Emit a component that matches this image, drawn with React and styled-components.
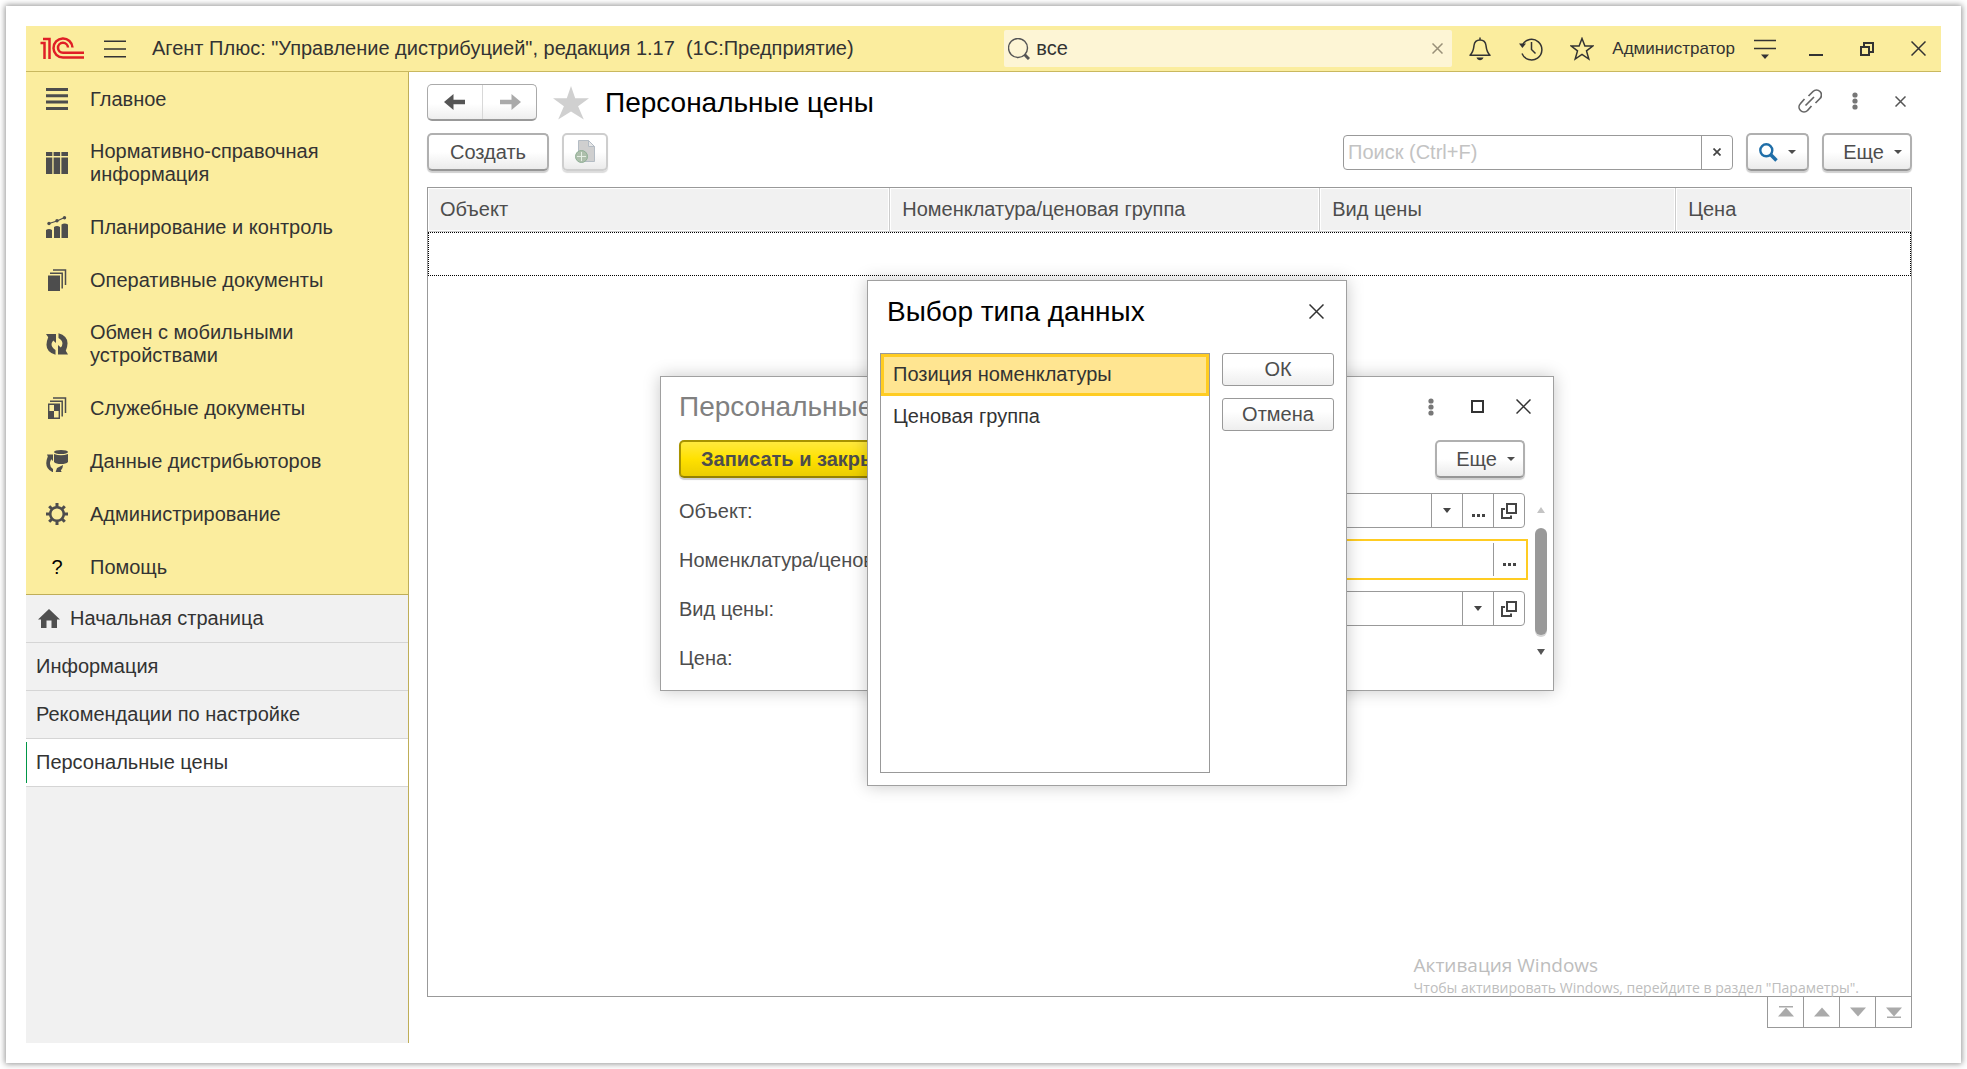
import React from "react";
import styled, { createGlobalStyle, css } from "styled-components";

const GlobalStyle = createGlobalStyle`
  *, *::before, *::after { box-sizing: border-box; }
  body { margin: 0; background: #fff; }
  body, button, input { font-family: "Liberation Sans", Arial, sans-serif; font-size: 20px; line-height: 23px; color: #333; }
  button { padding: 0; border: 0; background: none; cursor: pointer; }
  svg { display: block; flex: none; }
  h1, h2, ul, p { margin: 0; padding: 0; font-weight: 400; list-style: none; }
`;

const Page = styled.div`
  display: flex;
  min-height: 100vh;
  padding: 6px;
`;

const Card = styled.div`
  flex: 1;
  min-width: 0;
  display: flex;
  flex-direction: column;
  padding: 20px;
  background: #fff;
  box-shadow: 0 0 6px 1px rgba(0, 0, 0, 0.42);
`;

/* ---------- top bar ---------- */

const TopBar = styled.header`
  display: flex;
  align-items: center;
  gap: 5px;
  height: 46px;
  padding-left: 14px;
  background: #fbed9e;
  border-bottom: 1px solid #c9b85f;
`;

const Brand = styled.div`
  flex: 1;
  min-width: 0;
  display: flex;
  align-items: center;
  gap: 20px;
  white-space: nowrap;
`;

const BrandTitle = styled.span`
  padding-left: 6px;
  white-space: pre;
`;

const GlobalSearch = styled.label`
  flex: 0 1 448px;
  display: flex;
  align-items: center;
  gap: 6px;
  height: 37px;
  padding: 0 4px;
  border-radius: 2px;
  background: #fdf5d5;
`;

const PlainInput = styled.input`
  flex: 1;
  min-width: 0;
  width: 100%;
  padding: 0;
  border: 0;
  outline: 0;
  background: transparent;
  &::placeholder { color: #c3c3c3; opacity: 1; }
`;

const IconButton = styled.button`
  display: flex;
  align-items: center;
  justify-content: center;
  width: ${(p) => p.$w || 46}px;
  height: ${(p) => p.$h || 36}px;
  color: ${(p) => p.$color || "#333"};
`;

const UserName = styled.button`
  padding: 0 2px;
  font-size: 17px;
`;

/* ---------- sidebar ---------- */

const Body = styled.div`
  flex: 1;
  display: flex;
  min-height: 0;
`;

const Sidebar = styled.aside`
  flex: 0 0 383px;
  background: #f1f1f1;
  border-right: 1px solid #bfae58;
`;

const Sections = styled.nav`
  padding: 1px 0;
  background: #fbed9e;
  box-shadow: inset 0 -1px #bfae58;
`;

const SectionLink = styled.a`
  display: flex;
  align-items: center;
  gap: 22px;
  min-height: 53px;
  padding: 14px 60px 15px 20px;
  color: #333;
  text-decoration: none;
`;

const OpenTab = styled.a`
  display: flex;
  align-items: center;
  gap: 10px;
  height: 48px;
  padding-left: ${(p) => (p.$home ? 12 : 10)}px;
  border-bottom: 1px solid #d5d5d5;
  color: #333;
  text-decoration: none;
  ${(p) => p.$active && css`
    background: linear-gradient(#009646, #009646) 0 3px / 1px 41px no-repeat #fff;
  `}
`;

/* ---------- work area ---------- */

const Workspace = styled.main`
  position: relative;
  flex: 1;
  min-width: 0;
  display: flex;
  flex-direction: column;
  padding: 12px 29px 15px 18px;
`;

const Row = styled.div`
  display: flex;
  align-items: center;
  gap: ${(p) => p.$gap || 0}px;
`;

const Spacer = styled.div`flex: 1;`;

const Title = styled.h1`
  font-size: 28px;
  line-height: 36px;
  color: #000;
`;

const HeadActions = styled.div`
  display: flex;
  align-self: flex-start;
  gap: 21px;
`;

const NavButtons = styled.div`
  display: flex;
  height: 37px;
  border: 1px solid #aaa;
  border-bottom: 2px solid #999;
  border-radius: 5px;
  background: linear-gradient(#fff 55%, #eee);
`;

const NavButton = styled.button`
  display: flex;
  align-items: center;
  justify-content: center;
  width: 54px;
  color: ${(p) => (p.$muted ? "#aaa" : "#555")};
  & + & { border-left: 1px solid #d8d8d8; }
`;

const raised = css`
  border: 2px solid #b0b0b0;
  border-bottom-color: #969696;
  border-radius: 5px;
  box-shadow: 0 2px 1px #cfcfcf;
  background: linear-gradient(#fff 50%, #ebebeb);
  color: #4d4d4d;
`;

const Button = styled.button`
  ${raised}
  display: flex;
  align-items: center;
  justify-content: center;
  gap: 10px;
  height: 38px;
  padding: 0 ${(p) => p.$pad || 20}px;
  ${(p) => p.$faded && css`
    border-color: #cecece;
    box-shadow: 0 2px 1px #dcdcdc;
  `}
  ${(p) => p.$primary && css`
    border-color: #a89300;
    border-bottom-color: #948100;
    background: linear-gradient(#ffe93e, #ffe100 50%, #ebcd00);
    font-weight: 700;
  `}
`;

const MoreButton = styled(Button)`
  width: 90px;
  padding: 0 8px 0 19px;
`;

const Toolbar = styled(Row)`
  margin-top: 12px;
  margin-bottom: 16px;
`;

const Field = styled.div`
  flex: ${(p) => (p.$w ? `0 1 ${p.$w}px` : 1)};
  min-width: 0;
  display: flex;
  height: 35px;
  padding-left: 4px;
  border: 1px solid #999;
  border-radius: 4px;
  background: #fff;
  ${(p) => p.$focused && css`
    border-color: transparent;
    border-radius: 0;
    outline: 2px solid #fc2;
    outline-offset: 1px;
  `}
`;

const FieldButton = styled.button`
  display: flex;
  align-items: center;
  justify-content: center;
  flex: 0 0 31px;
  border-left: 1px solid #999;
  color: #444;
`;

const ListFrame = styled.div`
  flex: 1;
  border: 1px solid #999;
`;

const Grid = styled.table`
  width: 100%;
  table-layout: fixed;
  border-collapse: separate;
  border-spacing: 0;
`;

const HeadCell = styled.th`
  width: ${(p) => p.$w};
  height: 44px;
  padding: 0 12px;
  border-bottom: 1px solid #ccc;
  background: #f1f1f1;
  box-shadow: inset 0 0 0 1px #fff;
  color: #4d4d4d;
  font-weight: 400;
  text-align: left;
  & + & { border-left: 1px solid #ccc; }
`;

const CurrentCell = styled.td`
  height: 44px;
  padding: 0;
  border: 1px dotted #000;
`;

const Pager = styled.div`
  display: flex;
  align-self: flex-end;
`;

const PagerButton = styled.button`
  display: flex;
  align-items: center;
  justify-content: center;
  width: 36px;
  height: 31px;
  border: 1px solid #999;
  border-width: 0 1px 1px 0;
  color: #aaa;
  &:first-child { width: 37px; border-left-width: 1px; }
`;

const Watermark = styled.div`
  position: absolute;
  right: 82px;
  bottom: 45px;
  color: #bdbdbd;
  font-family: "Open Sans", "Noto Sans", sans-serif;
  pointer-events: none;
`;

const WatermarkTitle = styled.p`
  font-size: 19px;
  line-height: 25px;
`;

const WatermarkText = styled.p`
  font-size: 14px;
  line-height: 20px;
`;

/* ---------- windows over the list ---------- */

const Window = styled.section`
  position: absolute;
  left: ${(p) => p.$left}px;
  top: ${(p) => p.$top}px;
  width: ${(p) => p.$width}px;
  border: 1px solid #a0a0a0;
  background: #fff;
  box-shadow: 0 0 16px rgba(0, 0, 0, 0.22);
`;

const WindowTitle = styled.h2`
  flex: 1;
  min-width: 0;
  font-size: 28px;
  line-height: 36px;
  color: ${(p) => p.$color || "#000"};
`;

const FormHead = styled(Row)`
  align-items: flex-start;
  padding: 12px 7px 0 18px;
`;

const FormTools = styled(Row)`
  justify-content: space-between;
  padding: 15px 28px 0 18px;
`;

const FormBody = styled.div`
  display: flex;
  gap: 10px;
  padding: 15px 6px 15px 18px;
`;

const FormGrid = styled.div`
  flex: 1;
  display: grid;
  grid-template-columns: 280px 1fr;
  grid-auto-rows: 35px;
  row-gap: 14px;
  align-items: center;
`;

const FieldLabel = styled.label`
  padding-top: 2px;
  color: #4d4d4d;
  white-space: nowrap;
`;

const ScrollTrack = styled.div`
  display: flex;
  flex-direction: column;
  align-items: center;
  width: 12px;
  padding: 14px 0 17px;
`;

const ScrollThumb = styled.div`
  width: 12px;
  height: 107px;
  margin: 15px 0 14px;
  border-radius: 6px;
  background: #999;
  box-shadow: 0 2px #d5d5d5;
`;

const PickHead = styled(Row)`
  align-items: flex-start;
  padding: 13px 7px 0 19px;
`;

const PickBody = styled.div`
  display: flex;
  align-items: flex-start;
  gap: 12px;
  padding: 23px 12px 12px;
`;

const OptionList = styled.ul`
  flex: 1;
  height: 420px;
  border: 1px solid #999;
`;

const Option = styled.li`
  height: 42px;
  padding: 6px 9px;
  border: 3px solid ${(p) => (p.$selected ? "#fc2" : "transparent")};
  background: ${(p) => (p.$selected ? "#ffe591" : "none")};
`;

const PickActions = styled.div`
  display: flex;
  flex-direction: column;
  gap: 12px;
`;

const FlatButton = styled.button`
  width: 112px;
  height: 33px;
  border: 1px solid #999;
  border-radius: 3px;
  background: linear-gradient(#fff 40%, #eee);
  color: #4d4d4d;
`;

/* ---------- drawings ---------- */

const Svg = ({ w = 22, h = w, children, ...rest }) => (
  <svg width={w} height={h} viewBox={`0 0 ${w} ${h}`} fill="none" stroke="currentColor" aria-hidden="true" {...rest}>
    {children}
  </svg>
);

const Logo = () => (
  <Svg w={44} h={23} stroke="#e01f26" strokeWidth="2.5">
    <path d="M0.5 6H4.500V22M3 2H9.500V22" />
    <path d="M32.500 10.500A9.500 9.500 0 1 0 23 20.500H44" />
    <path d="M28 10.500A5 5 0 1 0 23 15.800H44" />
  </Svg>
);

const Burger = () => (
  <Svg w={22} h={18} strokeWidth="1.4"><path d="M0 1.2H22M0 9H22M0 16.8H22" /></Svg>
);

const Cross = ({ s = 14, sw = 1.5 }) => (
  <Svg w={s} strokeWidth={sw}><path d={`M.5 .5L${s - 0.5} ${s - 0.5}M${s - 0.5} .5L.5 ${s - 0.5}`} /></Svg>
);

const Dots = () => (
  <Svg w={6} h={18} fill="#777" stroke="none">
    <circle cx="3" cy="3" r="2.6" /><circle cx="3" cy="9" r="2.6" /><circle cx="3" cy="15" r="2.6" />
  </Svg>
);

const Caret = ({ w = 8, h = 5 }) => (
  <Svg w={w} h={h} fill="currentColor" stroke="none"><path d={`M0 0H${w}L${w / 2} ${h}Z`} /></Svg>
);

const Lens = () => (
  <Svg w={22} h={22} stroke="#555">
    <circle cx="10" cy="10" r="9.500" strokeWidth="1.4" /><path d="M16.500 16.500L21 21" strokeWidth="3" />
  </Svg>
);

const BlueLens = () => (
  <Svg w={19} h={19} stroke="#1f6ea8">
    <circle cx="7.3" cy="7.3" r="6" strokeWidth="2.4" /><path d="M11.8 11.8L17.5 17.5" strokeWidth="3.6" />
  </Svg>
);

const Bell = () => (
  <Svg w={22} h={24} strokeWidth="1.5">
    <path d="M11 .5V3M1 18.2C4.5 15 4.6 12 5 8.5C5.4 5 8 3 11 3S16.600 5 17 8.500C17.400 12 17.500 15 21 18.200Z" strokeLinejoin="round" />
    <path d="M7.500 20.500H14.500C13.800 22.500 12.600 23.200 11 23.200S8.200 22.500 7.500 20.500Z" fill="currentColor" stroke="none" />
  </Svg>
);

const Clock = () => (
  <Svg w={24} h={24} strokeWidth="1.5">
    <path d="M3.400 8A10.300 10.300 0 1 1 3 16.500" /><path d="M12.500 5V12.500L16.500 16.500" />
    <path d="M0 6.500H7L3.400 11Z" fill="currentColor" stroke="none" />
  </Svg>
);

const StarOutline = () => (
  <Svg w={24} h={24} strokeWidth="1.5">
    <path d="M12 1.500L14.900 9H22.800L16.500 13.900L18.800 22L12 17.300L5.200 22L7.500 13.900L1.200 9H9.100Z" />
  </Svg>
);

const FilledStar = () => (
  <Svg w={36} h={34} fill="#d0d0d0" stroke="none">
    <path d="M18 0L22.200 12.200H36L25.100 20.300L30.800 33.500L18 25.600L5.200 33.500L10.900 20.300L0 12.200H13.800Z" />
  </Svg>
);

const ServiceMenu = () => (
  <Svg w={22} h={20} strokeWidth="1.5">
    <path d="M0 1.500H22M0 9.500H22" /><path d="M7 15.500H15L11 20Z" fill="currentColor" stroke="none" />
  </Svg>
);

const Minimize = () => <Svg w={14} h={14} strokeWidth="2"><path d="M0 13H14" /></Svg>;
const Restore = () => (
  <Svg w={14} h={14} strokeWidth="2"><path d="M1 5H9V13H1ZM4 5V1H13V10H9" /></Svg>
);
const Maximize = () => <Svg w={13} h={13} strokeWidth="2"><path d="M1 1H12V12H1Z" /></Svg>;

const LinkIcon = () => (
  <Svg w={24} h={24} stroke="#666" strokeWidth="1.700">
    <path d="M10.500 7L15 2.500A4.800 4.800 0 0 1 22 9.500L17.500 14M6.500 10L2.500 14.500A4.800 4.800 0 0 0 9.500 21.500L13.500 17M7.500 16.500L16 8" />
  </Svg>
);

const Arrow = ({ back }) => (
  <Svg w={22} h={16} fill="currentColor" stroke="none">
    <path d={back ? "M0 8L9.500 0V5.800H21V10.200H9.500V16Z" : "M22 8L12.500 0V5.800H1V10.200H12.500V16Z"} />
  </Svg>
);

const NewDoc = () => (
  <Svg w={20} h={24}>
    <path d="M3.500 .5H13.500L19.500 6.500V21.500H3.500Z" fill="#cfcfcf" stroke="#b4bcc4" />
    <path d="M13.500 .5V6.500H19.500Z" fill="#e6e6e6" stroke="#b4bcc4" />
    <circle cx="6.500" cy="16.500" r="6" fill="#aebfac" stroke="#8fb096" />
    <path d="M6.500 12V21M2 16.500H11" stroke="#e4eee4" />
  </Svg>
);

const OpenIcon = () => (
  <Svg w={16} h={16} strokeWidth="2"><path d="M6 1H15V10H6ZM4 6H1V15H10V12.500" /></Svg>
);

const Ellipsis = () => (
  <Svg w={13} h={13} fill="currentColor" stroke="none">
    <path d="M0 10H3V13H0ZM5 10H8V13H5ZM10 10H13V13H10Z" />
  </Svg>
);

const PageArrow = ({ up, edge }) => (
  <Svg w={16} h={12} fill="currentColor" stroke="none">
    <path d={up ? "M0 10.500L8 1.500L16 10.500Z" : "M0 1.500H16L8 10.500Z"} />
    {edge && <path d={up ? "M1 0H15V1.500H1Z" : "M1 10.500H15V12H1Z"} />}
  </Svg>
);

const House = () => (
  <Svg w={22} h={19} fill="#505050" stroke="none">
    <path d="M11 0L22 10.500H19V19H13.500V11.500H8.500V19H3V10.500H0Z" />
  </Svg>
);

const dark = { fill: "#4d4d4d", stroke: "none" };

const sectionIcons = {
  main: <Svg {...dark}><path d="M0 0H22V3H0ZM0 6.300H22V9.300H0ZM0 12.600H22V15.600H0ZM0 19H22V22H0Z" /></Svg>,
  table: (
    <Svg {...dark}>
      <path d="M0 0H6.300V4H0ZM7.600 0H14.100V4H7.600ZM15.400 0H22V4H15.400ZM0 5.500H6.300V22H0ZM7.600 5.500H14.100V22H7.600ZM15.400 5.500H22V22H15.400Z" />
    </Svg>
  ),
  chart: (
    <Svg {...dark}>
      <path d="M0 14Q3 12 6 14V22H0ZM8 11Q11 9 14 11V22H8ZM15.500 8.500Q18.500 6.500 22 8.500V22H15.500Z" />
      <path d="M3 7.500L11 5L18.500 1.500" fill="none" stroke="#4d4d4d" strokeWidth="1.300" />
      <circle cx="3" cy="7.500" r="1.700" /><circle cx="11" cy="4.800" r="1.700" /><circle cx="18.500" cy="1.700" r="1.700" />
    </Svg>
  ),
  docs: (
    <Svg {...dark}>
      <path d="M2 6.500H14V22H2Z" />
      <path d="M4 4.200H16.200V19.500M7 1H19.500V16" fill="none" stroke="#4d4d4d" strokeWidth="1.500" />
    </Svg>
  ),
  sync: (
    <Svg {...dark}>
      <path d="M0 1H10V10L7.200 7.400Q3 13 9.500 17V21.700Q-3.500 18 2.200 4.200Z" />
      <path d="M22 21.500H12V12L14.800 14.600Q19 9 12.500 5V.3Q25.500 4 19.800 17.800Z" />
    </Svg>
  ),
  service: (
    <Svg {...dark}>
      <path d="M2.700 7.200H13.300V21.300H2.700Z" fill="none" stroke="#4d4d4d" strokeWidth="1.400" />
      <path d="M8 7H13.500V14H8ZM2.500 14H8V21.500H2.500Z" />
      <path d="M4 4.200H16.200V19.500M7 1H19.500V16" fill="none" stroke="#4d4d4d" strokeWidth="1.500" />
    </Svg>
  ),
  data: (
    <Svg {...dark}>
      <ellipse cx="15" cy="2" rx="7" ry="2" />
      <path d="M8 4Q15 6.500 22 4V12Q20 14 15 14Q10 14 8 12Z" />
      <path d="M1 4.500H7V11L5.200 9.200Q2 15.500 7 19V22.300Q-3 18 1.800 6.500ZM17 15L11 18L9.500 22.500H16L14.800 20.500Q17 18.500 17 15Z" />
    </Svg>
  ),
  gear: (
    <Svg stroke="#4d4d4d">
      <circle cx="11" cy="11" r="6.800" strokeWidth="2.600" />
      <path d="M11 0V4M11 18V22M0 11H4M18 11H22M3.200 3.200L6 6M16 16L18.800 18.800M3.200 18.800L6 16M16 6L18.800 3.200" strokeWidth="3" />
    </Svg>
  ),
};

const QuestionMark = styled.span`
  width: 22px;
  color: #000;
  text-align: center;
`;

const sections = [
  ["main", "Главное"],
  ["table", "Нормативно-справочная информация"],
  ["chart", "Планирование и контроль"],
  ["docs", "Оперативные документы"],
  ["sync", "Обмен с мобильными устройствами"],
  ["service", "Служебные документы"],
  ["data", "Данные дистрибьюторов"],
  ["gear", "Администрирование"],
  ["help", "Помощь"],
];

const columns = [
  ["Объект", "31.1%"],
  ["Номенклатура/ценовая группа", "29%"],
  ["Вид цены", "24%"],
  ["Цена", "auto"],
];

const formFields = [
  { id: "object", label: "Объект:", tools: ["list", "pick", "open"] },
  { id: "item", label: "Номенклатура/ценовая группа:", tools: ["pick"], focused: true },
  { id: "kind", label: "Вид цены:", tools: ["list", "open"] },
];

const fieldTools = {
  list: ["Выбрать из списка", <Caret />],
  pick: ["Выбрать", <Ellipsis />],
  open: ["Открыть", <OpenIcon />],
};

function Header() {
  return (
    <TopBar>
      <Brand>
        <Logo />
        <IconButton $w={22} aria-label="Меню"><Burger /></IconButton>
        <BrandTitle>{'Агент Плюс: "Управление дистрибуцией", редакция 1.17  (1С:Предприятие)'}</BrandTitle>
      </Brand>
      <GlobalSearch>
        <Lens />
        <PlainInput aria-label="Глобальный поиск" defaultValue="все" />
        <IconButton $w={22} $color="#999078" aria-label="Очистить"><Cross s={11} /></IconButton>
      </GlobalSearch>
      <IconButton aria-label="Уведомления"><Bell /></IconButton>
      <IconButton aria-label="История"><Clock /></IconButton>
      <IconButton aria-label="Избранное"><StarOutline /></IconButton>
      <UserName>Администратор</UserName>
      <IconButton aria-label="Сервис"><ServiceMenu /></IconButton>
      <IconButton aria-label="Свернуть"><Minimize /></IconButton>
      <IconButton aria-label="Восстановить"><Restore /></IconButton>
      <IconButton aria-label="Закрыть программу"><Cross s={15} /></IconButton>
    </TopBar>
  );
}

function SideMenu() {
  return (
    <Sidebar>
      <Sections>
        {sections.map(([icon, text]) => (
          <SectionLink href="#" key={icon}>
            {icon === "help" ? <QuestionMark>?</QuestionMark> : sectionIcons[icon]}
            <span>{text}</span>
          </SectionLink>
        ))}
      </Sections>
      <OpenTab href="#" $home><House />Начальная страница</OpenTab>
      <OpenTab href="#">Информация</OpenTab>
      <OpenTab href="#">Рекомендации по настройке</OpenTab>
      <OpenTab href="#" $active>Персональные цены</OpenTab>
    </Sidebar>
  );
}

function PriceForm() {
  return (
    <Window $left={251} $top={304} $width={894} aria-label="Персональные цены">
      <FormHead>
        <WindowTitle $color="#808080">Персональные цены</WindowTitle>
        <IconButton $h={35} aria-label="Действия"><Dots /></IconButton>
        <IconButton $h={35} aria-label="Развернуть"><Maximize /></IconButton>
        <IconButton $h={35} aria-label="Закрыть форму"><Cross s={15} /></IconButton>
      </FormHead>
      <FormTools>
        <Button $primary>Записать и закрыть</Button>
        <MoreButton>Еще<Caret w={8} h={4} /></MoreButton>
      </FormTools>
      <FormBody>
        <FormGrid>
          {formFields.map(({ id, label, tools, focused }) => (
            <React.Fragment key={id}>
              <FieldLabel htmlFor={id}>{label}</FieldLabel>
              <Field $focused={focused}>
                <PlainInput id={id} />
                {tools.map((t) => (
                  <FieldButton key={t} aria-label={fieldTools[t][0]}>{fieldTools[t][1]}</FieldButton>
                ))}
              </Field>
            </React.Fragment>
          ))}
          <FieldLabel htmlFor="price">Цена:</FieldLabel>
          <Row><Field $w={160}><PlainInput id="price" /></Field></Row>
        </FormGrid>
        <ScrollTrack>
          <Svg w={8} h={6} fill="#c4c4c4" stroke="none"><path d="M0 6H8L4 0Z" /></Svg>
          <ScrollThumb />
          <Svg w={8} h={6} fill="#555" stroke="none"><path d="M0 0H8L4 6Z" /></Svg>
        </ScrollTrack>
      </FormBody>
    </Window>
  );
}

function TypePicker() {
  return (
    <Window $left={458} $top={208} $width={480} role="dialog" aria-label="Выбор типа данных">
      <PickHead>
        <WindowTitle>Выбор типа данных</WindowTitle>
        <IconButton $h={34} aria-label="Закрыть окно"><Cross s={15} /></IconButton>
      </PickHead>
      <PickBody>
        <OptionList role="listbox" aria-label="Тип данных">
          <Option role="option" aria-selected="true" $selected>Позиция номенклатуры</Option>
          <Option role="option" aria-selected="false">Ценовая группа</Option>
        </OptionList>
        <PickActions>
          <FlatButton>ОК</FlatButton>
          <FlatButton>Отмена</FlatButton>
        </PickActions>
      </PickBody>
    </Window>
  );
}

export default function App() {
  return (
    <Page>
      <GlobalStyle />
      <Card>
        <Header />
        <Body>
          <SideMenu />
          <Workspace>
            <Row $gap={16}>
              <NavButtons>
                <NavButton aria-label="Назад"><Arrow back /></NavButton>
                <NavButton $muted aria-label="Вперед"><Arrow /></NavButton>
              </NavButtons>
              <FilledStar />
              <Title>Персональные цены</Title>
              <Spacer />
              <HeadActions>
                <IconButton $w={24} $h={34} aria-label="Получить ссылку"><LinkIcon /></IconButton>
                <IconButton $w={24} $h={34} aria-label="Еще действия"><Dots /></IconButton>
                <IconButton $w={24} $h={34} $color="#555" aria-label="Закрыть список"><Cross s={11} /></IconButton>
              </HeadActions>
            </Row>
            <Toolbar $gap={13}>
              <Button $pad={21}>Создать</Button>
              <Button $faded $pad={11} aria-label="Создать копированием"><NewDoc /></Button>
              <Spacer />
              <Field $w={390}>
                <PlainInput aria-label="Поиск" placeholder="Поиск (Ctrl+F)" />
                <FieldButton aria-label="Очистить поиск"><Cross s={8} sw={1.7} /></FieldButton>
              </Field>
              <Button $pad={11} aria-label="Найти"><BlueLens /><Caret w={8} h={4} /></Button>
              <MoreButton>Еще<Caret w={8} h={4} /></MoreButton>
            </Toolbar>
            <ListFrame>
              <Grid>
                <thead>
                  <tr>{columns.map(([name, w]) => <HeadCell key={name} $w={w}>{name}</HeadCell>)}</tr>
                </thead>
                <tbody>
                  <tr><CurrentCell colSpan={4} /></tr>
                </tbody>
              </Grid>
            </ListFrame>
            <Pager>
              <PagerButton aria-label="В начало"><PageArrow up edge /></PagerButton>
              <PagerButton aria-label="Вверх"><PageArrow up /></PagerButton>
              <PagerButton aria-label="Вниз"><PageArrow /></PagerButton>
              <PagerButton aria-label="В конец"><PageArrow edge /></PagerButton>
            </Pager>
            <Watermark>
              <WatermarkTitle>Активация Windows</WatermarkTitle>
              <WatermarkText>Чтобы активировать Windows, перейдите в раздел "Параметры".</WatermarkText>
            </Watermark>
            <PriceForm />
            <TypePicker />
          </Workspace>
        </Body>
      </Card>
    </Page>
  );
}
